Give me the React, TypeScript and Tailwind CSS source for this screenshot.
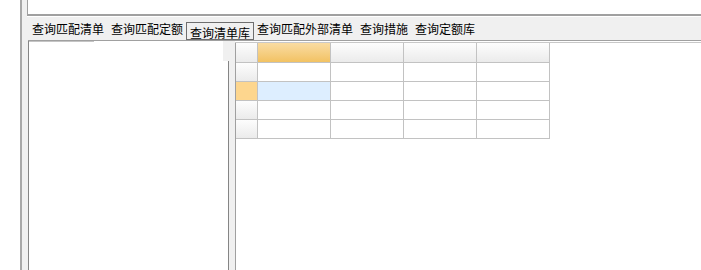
import React from "react";

const hdr = "bg-gradient-to-b from-[#fdfdfd] to-[#ebebeb]";
const cell = "border-r border-b border-[#c2c2c2]";

function Grid() {
  const rows = [0, 1, 2, 3];
  const cols = [0, 1, 2, 3];
  return (
    <div className="grid w-fit grid-cols-[22px_73px_73px_73px_73px] grid-rows-[20px_19px_19px_19px_19px] gap-0">
      <div className={`${hdr} ${cell}`} />
      {cols.map((c) => (
        <div
          key={"h" + c}
          className={
            c === 0
              ? `${cell} bg-gradient-to-b from-[#f9dca2] to-[#f2c262]`
              : `${hdr} ${cell}`
          }
        />
      ))}
      {rows.map((r) => (
        <React.Fragment key={"r" + r}>
          <div className={r === 1 ? `${cell} bg-[#fdd68e]` : `${hdr} ${cell}`} />
          {cols.map((c) => (
            <div
              key={c}
              className={r === 1 && c === 0 ? `${cell} bg-[#ddeeff]` : `${cell} bg-white`}
            />
          ))}
        </React.Fragment>
      ))}
    </div>
  );
}

export default function App() {
  return (
    <div className="flex h-[270px] w-[701px] flex-row overflow-hidden bg-white font-['Noto_Sans_CJK_SC','Noto_Sans',sans-serif] text-[12px] text-black">
      <div className="w-[20px] bg-white" />
      <div className="w-[2px] bg-[#a8a8a8]" />
      <div className="w-[5px] bg-[#f0f0f0]" />
      <div className="flex flex-1 flex-col bg-[#f0f0f0]">
        {/* top white box */}
        <div className="box-content h-[14px] border-b-2 border-l border-[#a0a0a0] bg-white" />
        {/* tab strip */}
        <div className="flex h-[24px] flex-row items-start border-t border-white pl-[1px] leading-[12px]">
          <div className="pl-[4px] pr-[3px] pt-[6px] whitespace-nowrap">查询匹配清单</div>
          <div className="pl-[4px] pr-[3px] pt-[6px] whitespace-nowrap">查询匹配定额</div>
          <div className="mt-[5px] h-[18px] border border-[#6e6e6e] px-[3px] pt-[4px] whitespace-nowrap">查询清单库</div>
          <div className="pl-[3px] pr-[4px] pt-[6px] whitespace-nowrap">查询匹配外部清单</div>
          <div className="pl-[3px] pr-[4px] pt-[6px] whitespace-nowrap">查询措施</div>
          <div className="pl-[3px] pr-[4px] pt-[6px] whitespace-nowrap">查询定额库</div>
        </div>
        {/* content */}
        <div className="flex flex-1 flex-col">
          <div className="ml-[1px] h-[1px] bg-[#a0a0a0]" />
          <div className="flex flex-1 flex-row">
            <div className="w-[1px] bg-[#f0f0f0]" />
            {/* left pane */}
            <div className="flex w-[201px] flex-row border-l border-[#858585] bg-white">
              <div className="flex flex-1 flex-col">
                <div className="h-[1px] w-[65px] bg-[#c4c4c4]" />
              </div>
              <div className="flex w-[6px] flex-col">
                <div className="h-[20px] bg-[#f0f0f0]" />
                <div className="flex-1 border-r border-[#858585]" />
              </div>
            </div>
            {/* splitter */}
            <div className="w-[6px] bg-[#f0f0f0]" />
            {/* right pane */}
            <div className="flex flex-1 flex-col">
              <div className="h-[1px] bg-white" />
              <div className="h-[1px] bg-[#c8c8c8]" />
              <div className="flex-1 border-l border-[#a0a0a0] bg-white">
                <Grid />
              </div>
            </div>
          </div>
        </div>
      </div>
    </div>
  );
}
